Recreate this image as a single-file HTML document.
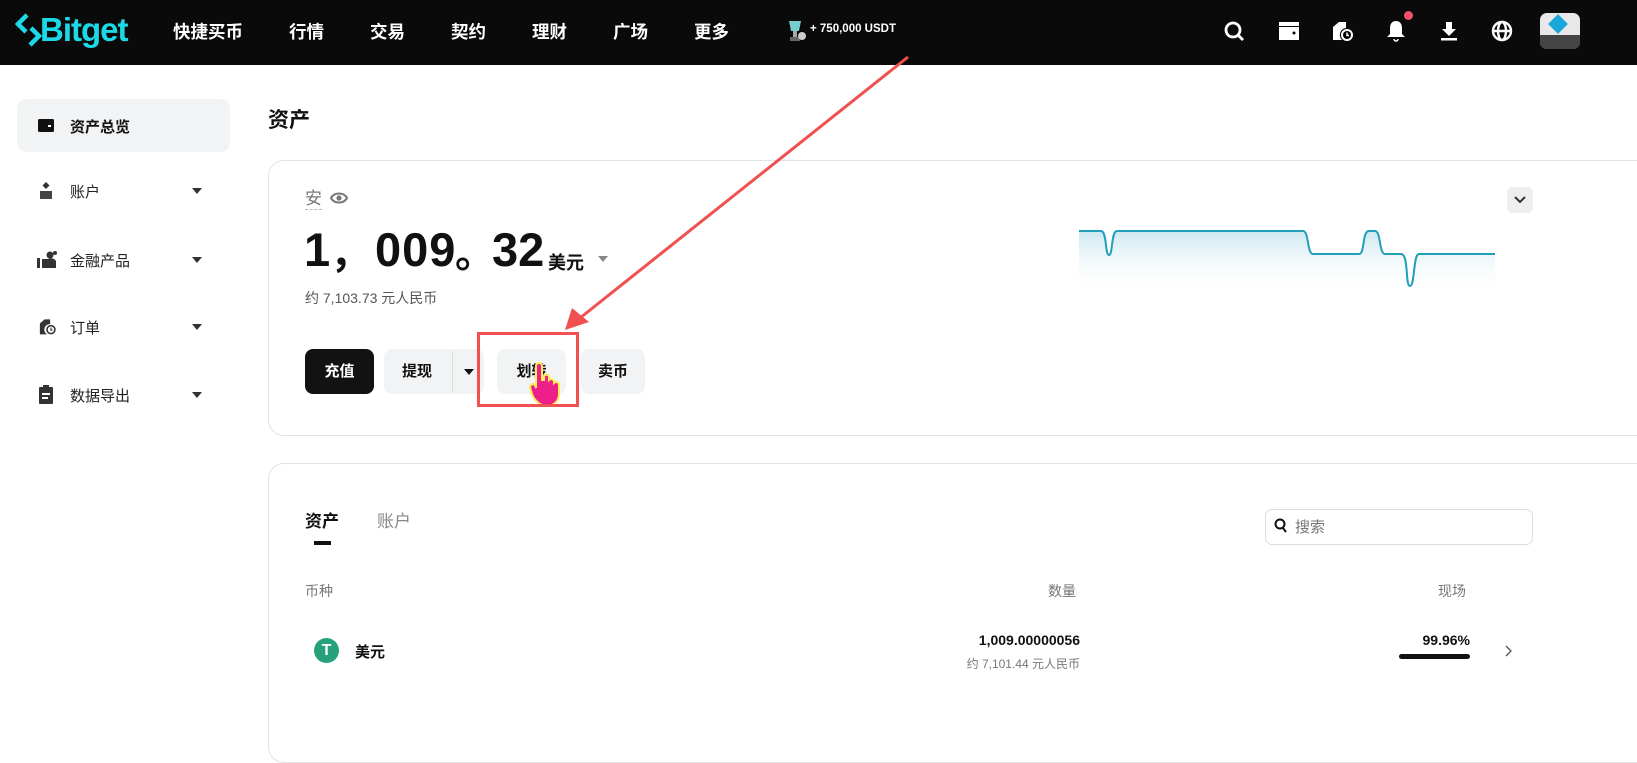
<!DOCTYPE html>
<html><head><meta charset="utf-8"><style>
*{margin:0;padding:0;box-sizing:border-box}
body{width:1637px;height:722px;overflow:hidden;background:#fff;font-family:"Liberation Sans","Noto Sans CJK SC",sans-serif;position:relative;color:#111}
.a{position:absolute;white-space:nowrap}
.hdr{position:absolute;left:0;top:0;width:1637px;height:65px;background:#0a0a0a}
.nav{color:#fff;font-size:17.5px;font-weight:bold;top:19px}
.side{font-size:15px;color:#222}
.caret{width:0;height:0;border-left:5px solid transparent;border-right:5px solid transparent;border-top:6px solid #333}
.card{position:absolute;border:1px solid #e3e3e3;border-radius:16px;background:#fff}
.btn{position:absolute;top:349px;height:45px;border-radius:8px;background:#f2f3f4;font-size:15px;font-weight:bold;line-height:45px;text-align:center;color:#111}
.big{position:absolute;top:222px;font-size:47px;font-weight:bold;line-height:56px}
</style></head><body>
<div class="hdr"></div>
<svg class="a" style="left:14px;top:12px" width="30" height="36" viewBox="0 0 30 36"><path d="M13 3 L4 12 L12 20 M17 16 L25 24 L16 33" stroke="#1dd9e8" stroke-width="4.5" fill="none" stroke-linejoin="miter"/></svg>
<div class="a" style="left:40px;top:11px;color:#1dd9e8;font-size:33px;font-weight:bold;letter-spacing:-1px">Bitget</div>
<div class="a nav" style="left:173px">快捷买币</div>
<div class="a nav" style="left:289px">行情</div>
<div class="a nav" style="left:370px">交易</div>
<div class="a nav" style="left:451px">契约</div>
<div class="a nav" style="left:532px">理财</div>
<div class="a nav" style="left:613px">广场</div>
<div class="a nav" style="left:694px">更多</div>
<svg class="a" style="left:784px;top:18px" width="24" height="26" viewBox="0 0 24 26"><path d="M5 3h12l-2 10h-8z" fill="#7cc"/><rect x="9" y="13" width="4" height="6" fill="#aaa"/><rect x="6" y="19" width="10" height="4" fill="#666"/><circle cx="18" cy="18" r="4" fill="#ccc"/></svg>
<div class="a" style="left:810px;top:23px;color:#fff;font-size:11.5px;font-weight:bold">+ 750,000 USDT</div>
<svg class="a" style="left:1222px;top:19px" width="24" height="24" viewBox="0 0 24 24"><circle cx="11" cy="11" r="7" stroke="#fff" stroke-width="2.8" fill="none"/><path d="M16 16l5 5" stroke="#fff" stroke-width="2.8"/></svg>
<svg class="a" style="left:1277px;top:20px" width="24" height="22" viewBox="0 0 24 22"><rect x="2" y="2" width="20" height="4" fill="#fff"/><rect x="2" y="7" width="20" height="13" fill="#fff"/><circle cx="17" cy="13" r="1.5" fill="#000"/></svg>
<svg class="a" style="left:1330px;top:19px" width="24" height="24" viewBox="0 0 24 24"><path d="M3 21V8l6-5h7v6a7 7 0 0 0-4 12z" fill="#fff"/><circle cx="17" cy="16" r="6" fill="#fff"/><circle cx="17" cy="16" r="4" fill="#000"/><path d="M17 13.5v3h2" stroke="#fff" stroke-width="1.5" fill="none"/></svg>
<svg class="a" style="left:1384px;top:18px" width="24" height="26" viewBox="0 0 24 26"><path d="M12 3c-4 0-6 3-6 7v6l-3 3h18l-3-3v-6c0-4-2-7-6-7z" fill="#fff"/><path d="M10 21a2 2 0 0 0 4 0" stroke="#fff" stroke-width="1.5" fill="none"/></svg>
<div class="a" style="left:1404px;top:11px;width:9px;height:9px;border-radius:50%;background:#f0506a"></div>
<svg class="a" style="left:1437px;top:19px" width="24" height="24" viewBox="0 0 24 24"><path d="M9 3h6v7h4l-7 7-7-7h4z" fill="#fff"/><rect x="4" y="19" width="16" height="2.5" fill="#fff"/></svg>
<svg class="a" style="left:1490px;top:19px" width="24" height="24" viewBox="0 0 24 24" fill="none" stroke="#fff" stroke-width="2.4"><circle cx="12" cy="12" r="9"/><ellipse cx="12" cy="12" rx="4" ry="9"/><path d="M3 12h18"/></svg>
<div class="a" style="left:1540px;top:13px;width:40px;height:36px;border-radius:7px;background:#e8e8e8;overflow:hidden"><div style="position:absolute;left:11px;top:4px;width:14px;height:14px;background:#1aa6d9;transform:rotate(45deg)"></div><div style="position:absolute;left:0;top:22px;width:40px;height:14px;background:#444"></div></div>
<div class="a" style="left:17px;top:99px;width:213px;height:53px;border-radius:9px;background:#f2f3f5"></div>
<svg class="a" style="left:37px;top:117px" width="18" height="16" viewBox="0 0 18 16"><rect x="1" y="2" width="16" height="13" rx="1.5" fill="#111"/><rect x="11" y="8" width="3" height="2" fill="#fff"/></svg>
<div class="a side" style="left:70px;top:116px;font-weight:bold;color:#111">资产总览</div>
<svg class="a" style="left:38px;top:181px" width="16" height="18" viewBox="0 0 16 18"><path d="M8 1l3.5 3.5L8 8 4.5 4.5z" fill="#333"/><rect x="2" y="10" width="12" height="8" fill="#444"/></svg>
<div class="a side" style="left:70px;top:181px">账户</div><div class="a caret" style="left:192px;top:188px"></div>
<svg class="a" style="left:36px;top:250px" width="22" height="20" viewBox="0 0 22 20"><rect x="1" y="8" width="3" height="10" fill="#333"/><path d="M6 9h6a6 6 0 0 1 8 2v7H6z" fill="#333"/><circle cx="14" cy="5" r="3.5" fill="#333"/><circle cx="19" cy="3" r="2" fill="#333"/></svg>
<div class="a side" style="left:70px;top:250px">金融产品</div><div class="a caret" style="left:192px;top:257px"></div>
<svg class="a" style="left:37px;top:317px" width="20" height="19" viewBox="0 0 24 24"><path d="M3 22V8l6-5h7v6a7 7 0 0 0-4 13z" fill="#333"/><circle cx="17" cy="16" r="6" fill="#333"/><circle cx="17" cy="16" r="4" fill="#fff"/><path d="M17 13.5v3h2" stroke="#333" stroke-width="1.5" fill="none"/></svg>
<div class="a side" style="left:70px;top:317px">订单</div><div class="a caret" style="left:192px;top:324px"></div>
<svg class="a" style="left:38px;top:385px" width="16" height="19" viewBox="0 0 16 19"><rect x="1" y="2" width="14" height="17" rx="1" fill="#333"/><rect x="5" y="0" width="6" height="4" fill="#333"/><rect x="4" y="8" width="8" height="2" fill="#fff"/><rect x="4" y="12" width="6" height="2" fill="#fff"/></svg>
<div class="a side" style="left:70px;top:385px">数据导出</div><div class="a caret" style="left:192px;top:392px"></div>
<div class="a" style="left:268px;top:104px;font-size:21px;font-weight:bold">资产</div>
<div class="card" style="left:268px;top:160px;width:1400px;height:276px"></div>
<div class="a" style="left:305px;top:189px;font-size:17px;color:#777;border-bottom:1px dashed #bbb;line-height:20px">安</div>
<svg class="a" style="left:330px;top:191px" width="18" height="14" viewBox="0 0 18 14"><path d="M1 7c3-6 13-6 16 0-3 6-13 6-16 0z" fill="none" stroke="#777" stroke-width="2"/><circle cx="9" cy="7" r="2.6" fill="#777"/></svg>
<div class="big" style="left:304px">1</div>
<div class="big" style="left:330px;font-size:40px;top:226px">，</div>
<div class="big" style="left:375px;letter-spacing:1px">009</div>
<div class="big" style="left:455px;font-size:40px;top:226px">。</div>
<div class="big" style="left:492px;letter-spacing:0px">32</div>
<div class="a" style="left:548px;top:249px;font-size:18px;font-weight:bold">美元</div>
<div class="a caret" style="left:598px;top:256px;border-top-color:#888"></div>
<div class="a" style="left:305px;top:288px;font-size:14px;color:#555">约 7,103.73 元人民币</div>
<div class="btn" style="left:305px;width:69px;background:#121212;color:#fff">充值</div>
<div class="btn" style="left:384px;width:100px;text-align:left;padding-left:18px">提现</div>
<div class="a" style="left:452px;top:351px;width:1px;height:41px;background:#ddd"></div>
<div class="a caret" style="left:464px;top:369px;border-top-color:#111"></div>
<div class="btn" style="left:497px;width:69px">划转</div>
<div class="btn" style="left:581px;width:64px">卖币</div>
<svg class="a" style="left:528px;top:362px" width="34" height="46" viewBox="0 0 34 46"><path d="M8 4a3 3 0 0 1 6 0v14h2v-4a3 3 0 0 1 5 0v4a3 3 0 0 1 5 1v2a3 3 0 0 1 5 1v10c0 7-5 12-12 12s-13-6-15-12l-2-7a3 3 0 0 1 5-2l1 3z" fill="#ee1f8a" stroke="#ffee55" stroke-width="2"/></svg>
<div class="a" style="left:477px;top:332px;width:102px;height:75px;border:3px solid #f0504f"></div>
<svg class="a" style="left:0;top:0" width="1637" height="722"><line x1="908" y1="57" x2="580" y2="318" stroke="#f0504f" stroke-width="3"/><path d="M565 330 L572 308 L589 322 Z" fill="#f0504f"/></svg>
<div class="a" style="left:1507px;top:187px;width:26px;height:26px;border-radius:5px;background:#eceef0"></div>
<svg class="a" style="left:1513px;top:195px" width="14" height="10" viewBox="0 0 14 10"><path d="M2 2l5 5 5-5" stroke="#333" stroke-width="2" fill="none"/></svg>
<svg class="a" style="left:1079px;top:225px" width="416" height="70" viewBox="0 0 416 70">
<defs><linearGradient id="g" x1="0" y1="0" x2="0" y2="1"><stop offset="0" stop-color="#cde8f0"/><stop offset="1" stop-color="#fff" stop-opacity="0"/></linearGradient></defs>
<path d="M0 6H22C28 6 26 30 30 30S32 6 38 6H224C230 6 228 29 234 29H280C286 29 283 6 290 6H296C302 6 300 29 306 29H322C330 29 326 61 331 61S334 29 340 29H416V70H0Z" fill="url(#g)"/>
<path d="M0 6H22C28 6 26 30 30 30S32 6 38 6H224C230 6 228 29 234 29H280C286 29 283 6 290 6H296C302 6 300 29 306 29H322C330 29 326 61 331 61S334 29 340 29H416" fill="none" stroke="#1f9fba" stroke-width="2"/></svg>
<div class="card" style="left:268px;top:463px;width:1400px;height:300px"></div>
<div class="a" style="left:305px;top:507px;font-size:17px;font-weight:bold">资产</div>
<div class="a" style="left:314px;top:541px;width:17px;height:4px;background:#111"></div>
<div class="a" style="left:377px;top:507px;font-size:17px;color:#888">账户</div>
<div class="a" style="left:1265px;top:509px;width:268px;height:36px;border:1px solid #ddd;border-radius:7px"></div>
<svg class="a" style="left:1274px;top:518px" width="14" height="16" viewBox="0 0 14 16"><circle cx="6" cy="6" r="4.5" stroke="#111" stroke-width="2" fill="none"/><path d="M9 10l3 4" stroke="#111" stroke-width="2"/></svg>
<div class="a" style="left:1295px;top:516px;font-size:15px;color:#777">搜索</div>
<div class="a" style="left:305px;top:581px;font-size:14px;color:#777">币种</div>
<div class="a" style="left:1048px;top:581px;font-size:14px;color:#777">数量</div>
<div class="a" style="left:1438px;top:581px;font-size:14px;color:#777">现场</div>
<div class="a" style="left:314px;top:638px;width:25px;height:25px;border-radius:50%;background:#26a17b;color:#fff;font-weight:bold;font-size:16px;text-align:center;line-height:25px">T</div>
<div class="a" style="left:355px;top:641px;font-size:15px;font-weight:bold">美元</div>
<div class="a" style="right:557px;top:632px;font-size:14px;font-weight:bold">1,009.00000056</div>
<div class="a" style="right:557px;top:655px;font-size:12px;color:#777">约 7,101.44 元人民币</div>
<div class="a" style="right:167px;top:632px;font-size:14px;font-weight:bold">99.96%</div>
<div class="a" style="left:1399px;top:654px;width:71px;height:5px;border-radius:3px;background:#111"></div>
<svg class="a" style="left:1503px;top:644px" width="10" height="14" viewBox="0 0 10 14"><path d="M3 2l5 5-5 5" stroke="#555" stroke-width="1.3" fill="none"/></svg>
</body></html>
